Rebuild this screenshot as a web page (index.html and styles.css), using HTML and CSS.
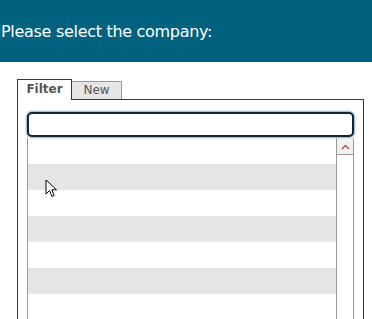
FILE: index.html
```html
<!DOCTYPE html>
<html lang="en">
<head>
    <meta charset="UTF-8">
    <title>Select company</title>
    <link rel="stylesheet" href="styles.css">
</head>
<body>

    <!-- Title bar -->
    <div class="header">
        <h1>Please select the company:</h1>
    </div>

    <div class="picker">
        <!-- Tabs -->
        <div class="tabs">
            <div class="tab active">Filter</div>
            <div class="tab">New</div>
        </div>

        <div class="panel">
            <input type="text" class="filter-input" id="filter">

            <div class="list">
                <div class="rows">
                    <div class="row"></div>
                    <div class="row alt"></div>
                    <div class="row"></div>
                    <div class="row alt"></div>
                    <div class="row"></div>
                    <div class="row alt"></div>
                    <div class="row"></div>
                </div>
                <div class="scrollbar">
                    <div class="scroll-up">
                        <svg width="9" height="6" viewBox="0 0 9 6"><path d="M1 5 L4.5 1.5 L8 5" fill="none" stroke="#b04a5a" stroke-width="1.3"/></svg>
                    </div>
                </div>
            </div>
        </div>

        <!-- mouse pointer -->
        <svg class="pointer" width="14" height="20" viewBox="0 0 14 20">
            <path d="M1 1 L1 15 L4.5 11.5 L7 17.5 L9.2 16.5 L6.8 10.8 L11.5 10.8 Z" fill="#fff" stroke="#000" stroke-width="1"/>
        </svg>
    </div>

</body>
</html>
```

FILE: styles.css
```css
/* Page */
body {
    margin: 0;
    padding: 0;
    background-color: #ffffff;
    font-family: Tahoma, "DejaVu Sans", sans-serif;
    overflow: hidden;
}

.header {
    height: 62px;
    background-color: #00627f;
    display: flex;
    align-items: center;
    padding-left: 1px;
}

.header h1 {
    margin: 0;
    font-size: 16px;
    font-weight: normal;
    color: #ffffff;
    letter-spacing: -0.3px;
}

/* Tabs + panel */
.picker {
    position: relative;
    width: 347px;
    margin: 17px 0 0 17px;
}

.tabs {
    display: flex;
    align-items: flex-end;
    height: 20px;
}

.tab {
    box-sizing: border-box;
    width: 50px;
    height: 18px;
    font-size: 12px;
    line-height: 17px;
    text-align: center;
    color: #555;
    background-color: #e6e6e6;
    border: 1px solid #999;
    border-bottom: none;
    border-left: none;
}

.tab.active {
    width: 55px;
    height: 21px;
    margin-bottom: -1px;
    font-weight: bold;
    line-height: 19px;
    background-color: #fff;
    border: 1px solid #2d3e46;
    border-bottom: none;
    position: relative;
    z-index: 1;
}

.panel {
    border: 1px solid #2d3e46;
    border-bottom: none;
    padding: 12px 9px 0 9px;
    height: 207px;
}

.filter-input {
    display: block;
    box-sizing: border-box;
    width: 327px;
    height: 25px;
    margin: 0;
    border: 2px solid #15232e;
    border-radius: 5px;
    box-shadow: 0 0 2px 1px #7fb3d1;
    outline: none;
}

.list {
    display: flex;
    margin-top: 1px;
    height: 181px;
    border-left: 1px solid #999;
}

.rows {
    flex: 1;
    overflow: hidden;
}

.row {
    height: 26px;
}

.row.alt {
    background-color: #e5e5e5;
}

.scrollbar {
    box-sizing: border-box;
    width: 18px;
    border-left: 1px solid #999;
    border-right: 1px solid #999;
    padding-top: 1px;
}

.scroll-up {
    height: 15px;
    border-bottom: 1px solid #999;
    background-color: #f2f2f2;
    display: flex;
    align-items: center;
    justify-content: center;
}

.pointer {
    position: absolute;
    left: 28px;
    top: 100px;
}
```
